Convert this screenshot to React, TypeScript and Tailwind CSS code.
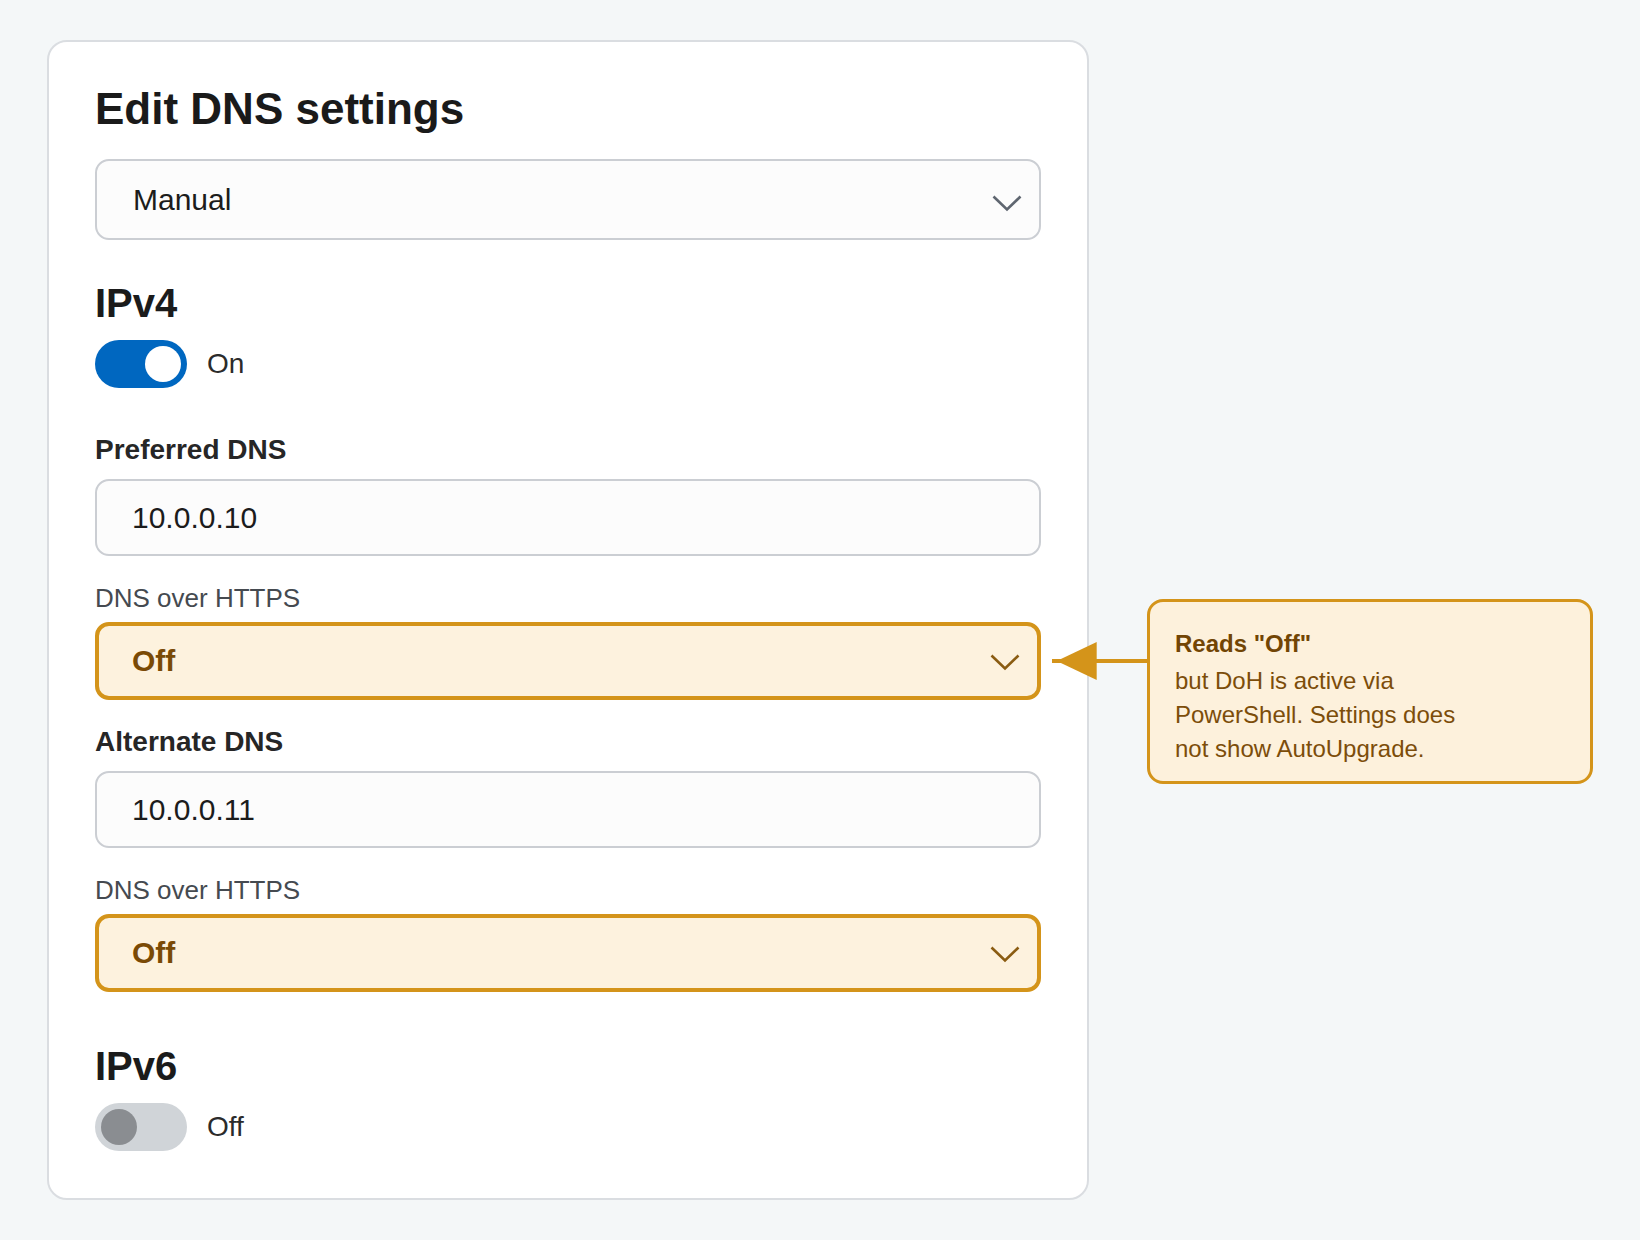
import type { ReactNode } from 'react';

const font = { fontFamily: '"Liberation Sans", Arial, sans-serif' };

function Chevron({ color, offset }: { color: string; offset: string }) {
  return (
    <svg width="30" height="17" viewBox="0 0 30 17" className={`shrink-0 ${offset}`}>
      <polyline points="1.5,1.5 15,14.5 28.5,1.5" fill="none" stroke={color} strokeWidth="2.6" />
    </svg>
  );
}

function TextBox({ value }: { value: string }) {
  return (
    <div className="mt-[12px] flex h-[77px] items-center rounded-[14px] border-2 border-[#cbced3] bg-[#fcfcfc] pl-[35px]">
      <span className="text-[30px] leading-[36px] text-[#1c1c1c]">{value}</span>
    </div>
  );
}

function DohSelect() {
  return (
    <>
      <p className="mt-[26px] text-[26px] leading-[32px] text-[#454a50]">DNS over HTTPS</p>
      <div className="mt-[8px] flex h-[78px] items-center justify-between rounded-[14px] border-4 border-[#d4941a] bg-[#fdf2de] pl-[33px] pr-[17px]">
        <span className="text-[30px] font-bold leading-[36px] text-[#7a4a05]">Off</span>
        <Chevron color="#8a5c12" offset="mt-[3px]" />
      </div>
    </>
  );
}

function Toggle({ on, label }: { on: boolean; label: string }) {
  return (
    <div className="mt-[13px] flex items-center gap-[20px]">
      <div
        className={
          on
            ? 'flex h-[48px] w-[92px] items-center justify-end rounded-full bg-[#0067c0] px-[6px]'
            : 'flex h-[48px] w-[92px] items-center justify-start rounded-full bg-[#d0d4d8] px-[6px]'
        }
      >
        <div className={on ? 'h-[36px] w-[36px] rounded-full bg-white' : 'h-[36px] w-[36px] rounded-full bg-[#8a8d91]'} />
      </div>
      <span className="text-[28px] leading-[32px] text-[#2b2b2b]">{label}</span>
    </div>
  );
}

function Label({ children, top }: { children: ReactNode; top: string }) {
  return <p className={`${top} text-[28px] font-bold leading-[34px] text-[#262626]`}>{children}</p>;
}

export default function App() {
  return (
    <div className="flex min-h-[1240px] items-start bg-[#f4f7f8] pl-[47px] pt-[40px]" style={font}>
      <div className="flex w-[1042px] flex-col rounded-[20px] border-2 border-[#dadde1] bg-white px-[46px] pb-[47px] pt-[41px]">
        <h1 className="text-[44px] font-bold leading-[52px] text-[#1a1a1a]">Edit DNS settings</h1>

        <div className="mt-[24px] flex h-[81px] items-center justify-between rounded-[14px] border-2 border-[#cbced3] bg-[#fcfcfc] pl-[36px] pr-[17px]">
          <span className="text-[30px] leading-[36px] text-[#1c1c1c]">Manual</span>
          <Chevron color="#5f6670" offset="mt-[7px]" />
        </div>

        <h2 className="mt-[39px] text-[40px] font-bold leading-[48px] text-[#1b1b1b]">IPv4</h2>
        <Toggle on label="On" />

        <Label top="mt-[45px]">Preferred DNS</Label>
        <TextBox value="10.0.0.10" />
        <DohSelect />

        <Label top="mt-[25px]">Alternate DNS</Label>
        <TextBox value="10.0.0.11" />
        <DohSelect />

        <h2 className="mt-[50px] text-[40px] font-bold leading-[48px] text-[#1b1b1b]">IPv6</h2>
        <Toggle on={false} label="Off" />
      </div>

      {/* callout pointing at the first DoH dropdown */}
      <div className="relative ml-[-37px] mt-[559px] flex items-start">
        <svg width="95" height="40" viewBox="0 0 95 40" className="mt-[42px] shrink-0">
          <line x1="0" y1="20" x2="95" y2="20" stroke="#d4941a" strokeWidth="4" />
          <polygon points="4.7,20 44.7,1 44.7,39" fill="#d4941a" />
        </svg>
        <div className="w-[446px] rounded-[16px] border-[3px] border-[#d4941a] bg-[#fdf1dc] pb-[15px] pl-[25px] pt-[25px]">
          <p className="mb-[3px] text-[24px] font-bold leading-[34px] text-[#724504]">Reads "Off"</p>
          <p className="text-[24px] leading-[34px] text-[#7c4d0a]">
            but DoH is active via
            <br />
            PowerShell. Settings does
            <br />
            not show AutoUpgrade.
          </p>
        </div>
      </div>
    </div>
  );
}
